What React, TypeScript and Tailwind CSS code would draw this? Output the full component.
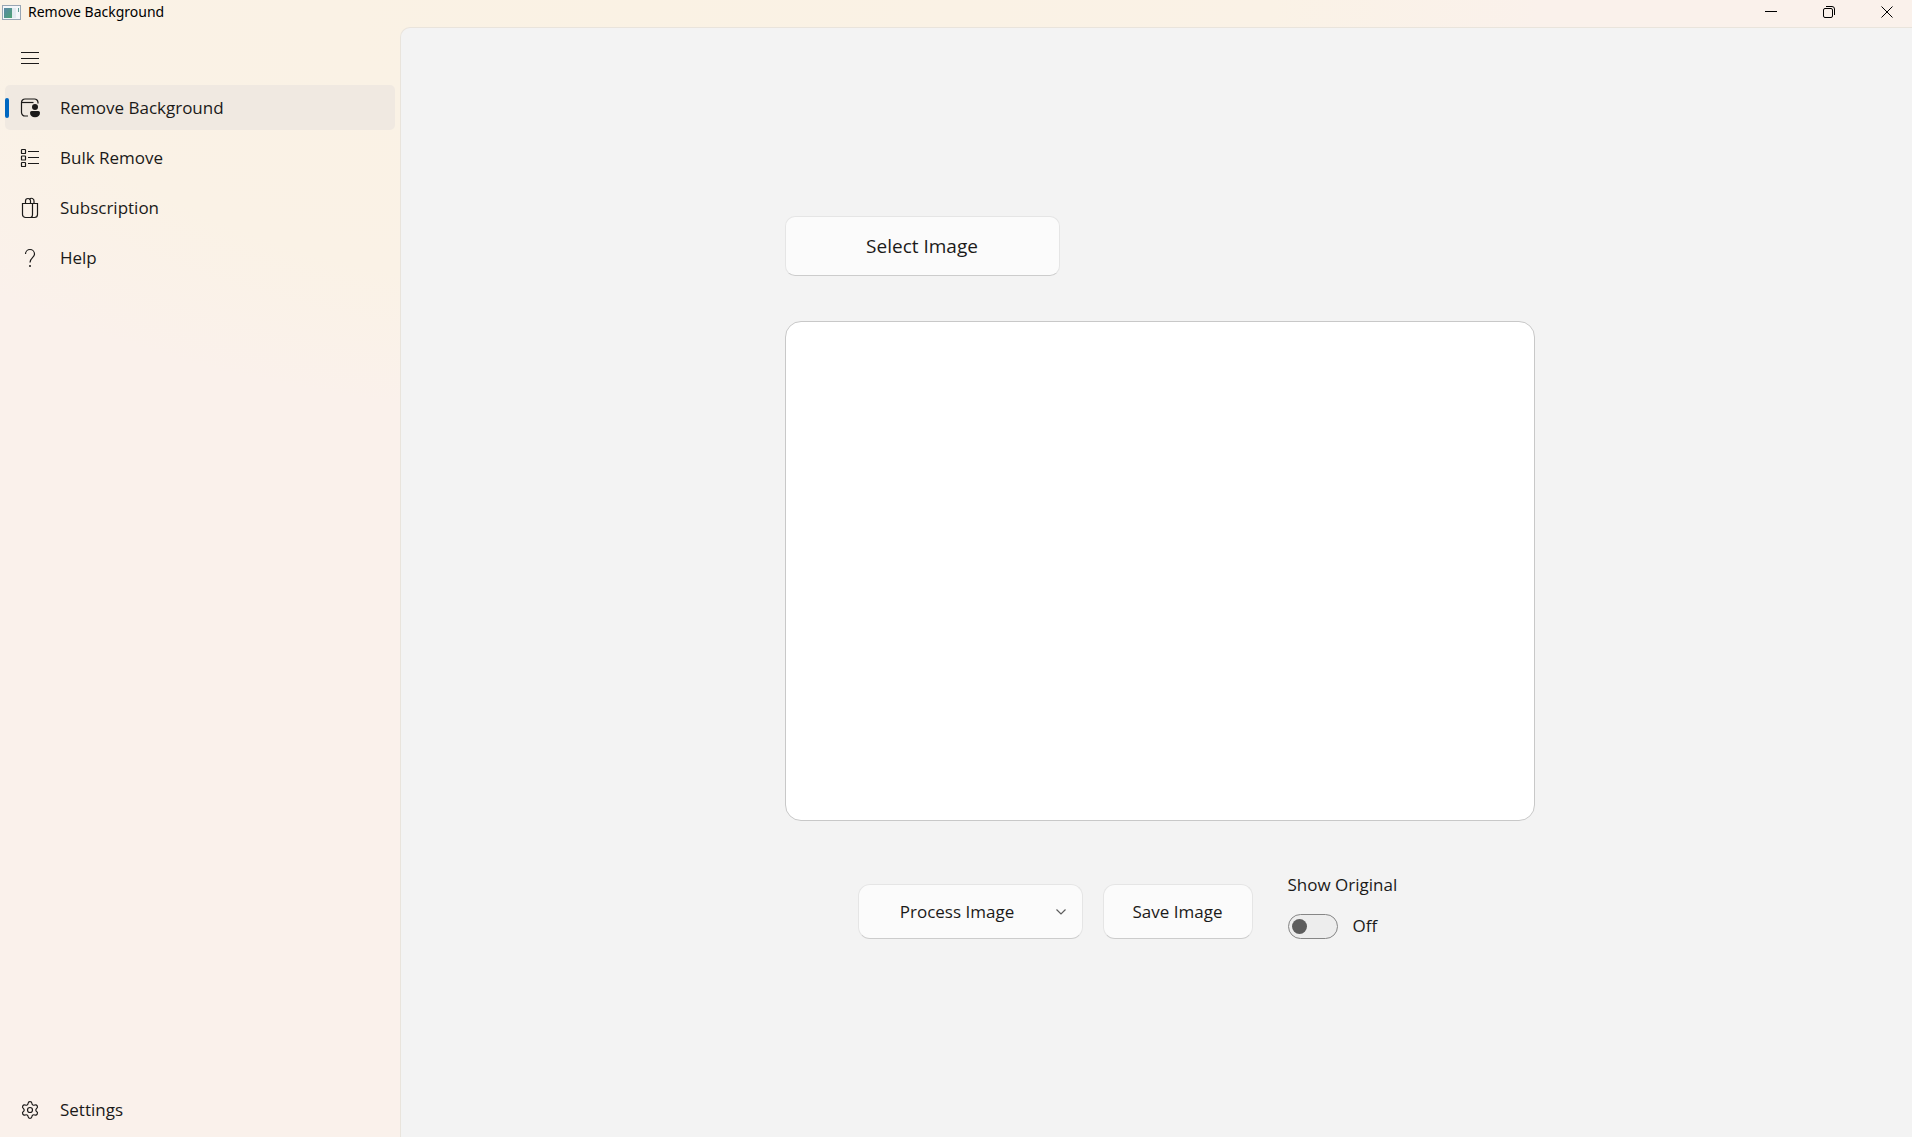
import { useState, type ReactNode } from "react";
import { Settings } from "lucide-react";

type NavItemProps = {
  label: string;
  icon: ReactNode;
  active?: boolean;
};

function NavItem({ label, icon, active }: NavItemProps) {
  return (
    <a
      href="#"
      aria-current={active ? "page" : undefined}
      className={
        active
          ? "flex h-[45px] items-center rounded-[5px] bg-[#f0e9e1]"
          : "flex h-[45px] items-center rounded-[5px] hover:bg-black/5"
      }
    >
      <span className={active ? "h-5 w-1 rounded-full bg-[#0067c0]" : "h-5 w-1"} />
      <span className="ml-[11px] flex w-5 justify-center">{icon}</span>
      <span className="ml-5 pt-px text-[17px] leading-6">{label}</span>
    </a>
  );
}

function RemoveIcon() {
  return (
    <svg width="20" height="20" viewBox="0 0 20 20" fill="none" stroke="currentColor" strokeWidth="1.2">
      <path d="M8 18H5A3.500 3.500 0 0 1 1.500 14.500V4.500A3.500 3.500 0 0 1 5 1H14.500A3.500 3.500 0 0 1 18 4.500V5.500" />
      <path d="M1.500 4.500H13.500" />
      <circle cx="15" cy="9" r="3" fill="currentColor" stroke="none" />
      <path d="M11.700 13H18.300A1.700 1.700 0 0 1 20 14.700C20 17.500 18 19.200 15 19.200S10 17.500 10 14.700A1.700 1.700 0 0 1 11.700 13Z" fill="currentColor" stroke="none" />
    </svg>
  );
}

function BulkIcon() {
  return (
    <svg width="20" height="20" viewBox="0 0 20 20" fill="none" stroke="currentColor" strokeWidth="1.2">
      <rect x="1.500" y="1.500" width="4" height="4" rx="0.600" />
      <rect x="1.500" y="8" width="4" height="4" rx="0.600" />
      <rect x="1.500" y="14.500" width="4" height="4" rx="0.600" />
      <path d="M8 3.500H19M8 9.500H19M8 15.500H19" />
    </svg>
  );
}

function SubscriptionIcon() {
  return (
    <svg width="20" height="22" viewBox="0 0 20 22" fill="none" stroke="currentColor" strokeWidth="1.200">
      <path d="M2.500 6.500H17.500V17.500A3 3 0 0 1 14.500 20.500H5.500A3 3 0 0 1 2.500 17.500Z" />
      <path d="M12.500 6.500V17.500A3 3 0 0 1 10.800 20.500" />
      <path d="M5.500 6.500V4A2.500 2.500 0 0 1 10.500 4V6.500" />
      <path d="M9.500 2.300A2.500 2.500 0 0 1 14 4V6.500" />
    </svg>
  );
}

function HelpIcon() {
  return (
    <svg width="20" height="20" viewBox="0 0 20 20" fill="none" stroke="currentColor" strokeWidth="1.200">
      <path d="M5.500 6A4.500 4.500 0 0 1 14.500 6C14.500 9.500 10 9.800 10 14.500" />
      <circle cx="10" cy="18" r="1" fill="currentColor" stroke="none" />
    </svg>
  );
}

function AppIcon() {
  return (
    <svg width="19" height="15" viewBox="0 0 19 15">
      <defs>
        <linearGradient id="app-icon" x1="0" y1="0" x2="1" y2="1">
          <stop offset="0" stopColor="#5b88a8" />
          <stop offset="1" stopColor="#4da373" />
        </linearGradient>
      </defs>
      <rect x="0.500" y="0.500" width="18" height="14" fill="#f4f7fa" stroke="#98a6b4" />
      <rect x="2" y="3" width="8" height="10" fill="url(#app-icon)" />
      <rect x="10" y="3" width="4" height="10" fill="#e3ebf1" />
      <rect x="16" y="3" width="1" height="4" fill="#5f9c94" />
    </svg>
  );
}

function TitleBar() {
  return (
    <header className="flex h-[27px] items-start justify-between">
      <div className="flex h-6 items-center gap-[7px] pl-[2px] text-black">
        <AppIcon />
        <h1 className="font-['Noto_Sans',sans-serif] text-[14px] leading-5">Remove Background</h1>
      </div>
      <div className="flex h-6 text-black">
        <button type="button" aria-label="Minimize" className="flex w-[58px] items-center justify-center">
          <svg width="12" height="12" viewBox="0 0 12 12" stroke="currentColor">
            <path d="M0 5.500H12" />
          </svg>
        </button>
        <button type="button" aria-label="Restore" className="flex w-[58px] items-center justify-center">
          <svg width="12" height="12" viewBox="0 0 12 12" fill="none" stroke="currentColor">
            <rect x="0.500" y="2.500" width="9" height="9" rx="1.500" />
            <path d="M3 0.500H9A2.500 2.500 0 0 1 11.500 3V9" />
          </svg>
        </button>
        <button type="button" aria-label="Close" className="flex w-[54px] items-center justify-center pl-1">
          <svg width="12" height="12" viewBox="0 0 12 12" stroke="currentColor">
            <path d="M0.500 0.500L11.500 11.500M11.500 0.500L0.500 11.500" />
          </svg>
        </button>
      </div>
    </header>
  );
}

function Sidebar() {
  return (
    <nav className="flex w-[400px] shrink-0 flex-col gap-[5px] px-[5px] pt-2 pb-[5px]">
      <button type="button" aria-label="Toggle navigation" className="flex h-[45px] w-[50px] items-center pl-4">
        <svg width="18" height="14" viewBox="0 0 18 14" stroke="currentColor">
          <path d="M0 1.500H18M0 7.500H18M0 12.500H18" />
        </svg>
      </button>
      <NavItem label="Remove Background" icon={<RemoveIcon />} active />
      <NavItem label="Bulk Remove" icon={<BulkIcon />} />
      <NavItem label="Subscription" icon={<SubscriptionIcon />} />
      <NavItem label="Help" icon={<HelpIcon />} />
      <div className="mt-auto">
        <NavItem label="Settings" icon={<Settings size={20} strokeWidth={1.4} />} />
      </div>
    </nav>
  );
}

export default function App() {
  const [showOriginal, setShowOriginal] = useState(false);

  return (
    <div className="flex min-h-screen flex-col bg-[#faf1eb] bg-[radial-gradient(ellipse_900px_420px_at_640px_0px,#faf2e4_0%,#faf2e6_70%,#faf1eb_100%)] font-['Open_Sans','Noto_Sans',sans-serif] text-[#1b1a19]">
      <TitleBar />
      <div className="flex flex-1">
        <Sidebar />
        <main className="flex flex-1 flex-col items-center justify-center rounded-tl-[10px] border-t border-l border-[#e9e4dc] bg-[#f3f3f3] pl-[6px]">
          <div className="flex w-[750px] flex-col">
            <button
              type="button"
              className="h-[60px] w-[275px] rounded-[10px] border border-[#e5e5e5] border-b-[#cccccc] bg-[#fbfbfb] text-[19px] leading-7"
            >
              Select Image
            </button>
            <div className="mt-[45px] h-[500px] rounded-[16px] border border-[#c8c8c8] bg-white" />
            <div className="mt-[52px] flex items-end pb-[10px] pl-[73px]">
              <button
                type="button"
                className="flex h-[55px] w-[225px] items-center rounded-[12px] border border-[#e5e5e5] border-b-[#cccccc] bg-[#fbfbfb] pr-4 text-[17px] leading-6"
              >
                <span className="flex-1">Process Image</span>
                <svg width="10" height="6" viewBox="0 0 10 6" fill="none" stroke="#5d5d5d" strokeWidth="1.200">
                  <path d="M0.500 0.500L5 5L9.500 0.500" />
                </svg>
              </button>
              <button
                type="button"
                className="ml-5 h-[55px] w-[150px] rounded-[12px] border border-[#e5e5e5] border-b-[#cccccc] bg-[#fbfbfb] text-[17px] leading-6"
              >
                Save Image
              </button>
              <label className="ml-[35px] flex flex-col gap-4 text-[17px] leading-6">
                <span>Show Original</span>
                <span className="flex h-[26px] items-center gap-[15px]">
                  <input
                    type="checkbox"
                    role="switch"
                    checked={showOriginal}
                    onChange={(e) => setShowOriginal(e.target.checked)}
                    className="flex h-[25px] w-[50px] appearance-none items-center rounded-full border border-[#868686] bg-[#ededed] px-[3px] before:block before:size-[15px] before:rounded-full before:bg-[#5d5d5d] checked:bg-[#0067c0] checked:before:ml-auto checked:before:bg-white"
                  />
                  <span>{showOriginal ? "On" : "Off"}</span>
                </span>
              </label>
            </div>
          </div>
        </main>
      </div>
    </div>
  );
}
